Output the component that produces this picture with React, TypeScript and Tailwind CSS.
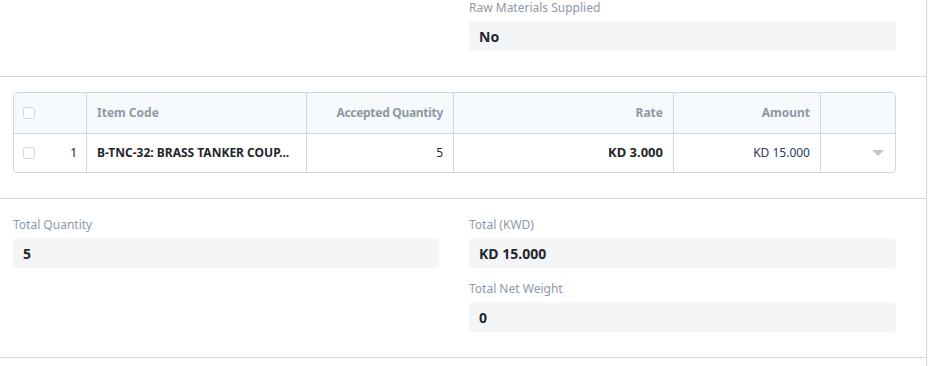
import React from "react";

const font = { fontFamily: '"Noto Sans", "Open Sans", sans-serif' };

function Field({ label, value }: { label: string; value: string }) {
  return (
    <div className="flex flex-col">
      <div className="text-[12px] leading-[16px] text-[#8d99a6]">{label}</div>
      <div className="mt-[5px] flex h-[30px] items-center rounded-[4px] bg-[#f4f5f7] px-[10px] text-[14px] font-bold text-[#1f272e]">
        {value}
      </div>
    </div>
  );
}

function Check() {
  return (
    <span className="inline-block h-[12px] w-[12px] rounded-[3px] border border-[#d1d8dd] bg-white" />
  );
}

export default function App() {
  return (
    <div className="h-[366px] w-[931px] overflow-hidden bg-white" style={font}>
      <div className="h-full w-[927px] border-r border-[#d1d8dd]">
        {/* top section */}
        <div className="grid h-[77px] grid-cols-[426px_427px] gap-x-[30px] border-b border-[#d1d8dd] pl-[13px]">
          <div />
          <div>
            <Field label="Raw Materials Supplied" value="No" />
          </div>
        </div>

        {/* items table */}
        <div className="h-[122px] border-b border-[#d1d8dd] pl-[13px] pr-[30px] pt-[15px]">
          <div className="overflow-hidden rounded-[4px] border border-[#d1d8dd]">
            <div className="flex h-[40px] bg-[#f7fafc] text-[12px] font-bold text-[#8d99a6]">
              <div className="flex w-[73px] items-center border-r border-[#d1d8dd] pl-[9px]">
                <Check />
              </div>
              <div className="flex w-[220px] items-center border-r border-[#d1d8dd] px-[10px]">Item Code</div>
              <div className="flex w-[147px] items-center justify-end border-r border-[#d1d8dd] px-[10px] tracking-[-0.3px]">
                Accepted Quantity
              </div>
              <div className="flex w-[220px] items-center justify-end border-r border-[#d1d8dd] px-[10px]">Rate</div>
              <div className="flex w-[147px] items-center justify-end border-r border-[#d1d8dd] px-[10px]">Amount</div>
              <div className="flex-1" />
            </div>
            <div className="flex h-[39px] border-t border-[#d1d8dd] text-[12px] text-[#1f272e]">
              <div className="flex w-[73px] items-center justify-between border-r border-[#d1d8dd] pl-[9px] pr-[9px]">
                <Check />
                <span>1</span>
              </div>
              <div className="flex w-[220px] items-center border-r border-[#d1d8dd] px-[10px] font-bold">
                <span className="truncate">B-TNC-32: BRASS TANKER COUP...</span>
              </div>
              <div className="flex w-[147px] items-center justify-end border-r border-[#d1d8dd] px-[10px]">5</div>
              <div className="flex w-[220px] items-center justify-end border-r border-[#d1d8dd] px-[10px] text-[13px] font-bold">
                KD 3.000
              </div>
              <div className="flex w-[147px] items-center justify-end border-r border-[#d1d8dd] px-[10px] text-[#2d3a5a]">
                KD 15.000
              </div>
              <div className="flex flex-1 items-center justify-end pr-[11px]">
                <svg width="12" height="6" viewBox="0 0 12 6">
                  <path d="M0 0h12L6 6z" fill="#c0c6cc" />
                </svg>
              </div>
            </div>
          </div>
        </div>

        {/* totals */}
        <div className="grid h-[159px] grid-cols-[426px_427px] gap-x-[30px] border-b border-[#d1d8dd] pl-[13px] pt-[18px]">
          <div>
            <Field label="Total Quantity" value="5" />
          </div>
          <div className="flex flex-col gap-[13px]">
            <Field label="Total (KWD)" value="KD 15.000" />
            <Field label="Total Net Weight" value="0" />
          </div>
        </div>
      </div>
    </div>
  );
}
